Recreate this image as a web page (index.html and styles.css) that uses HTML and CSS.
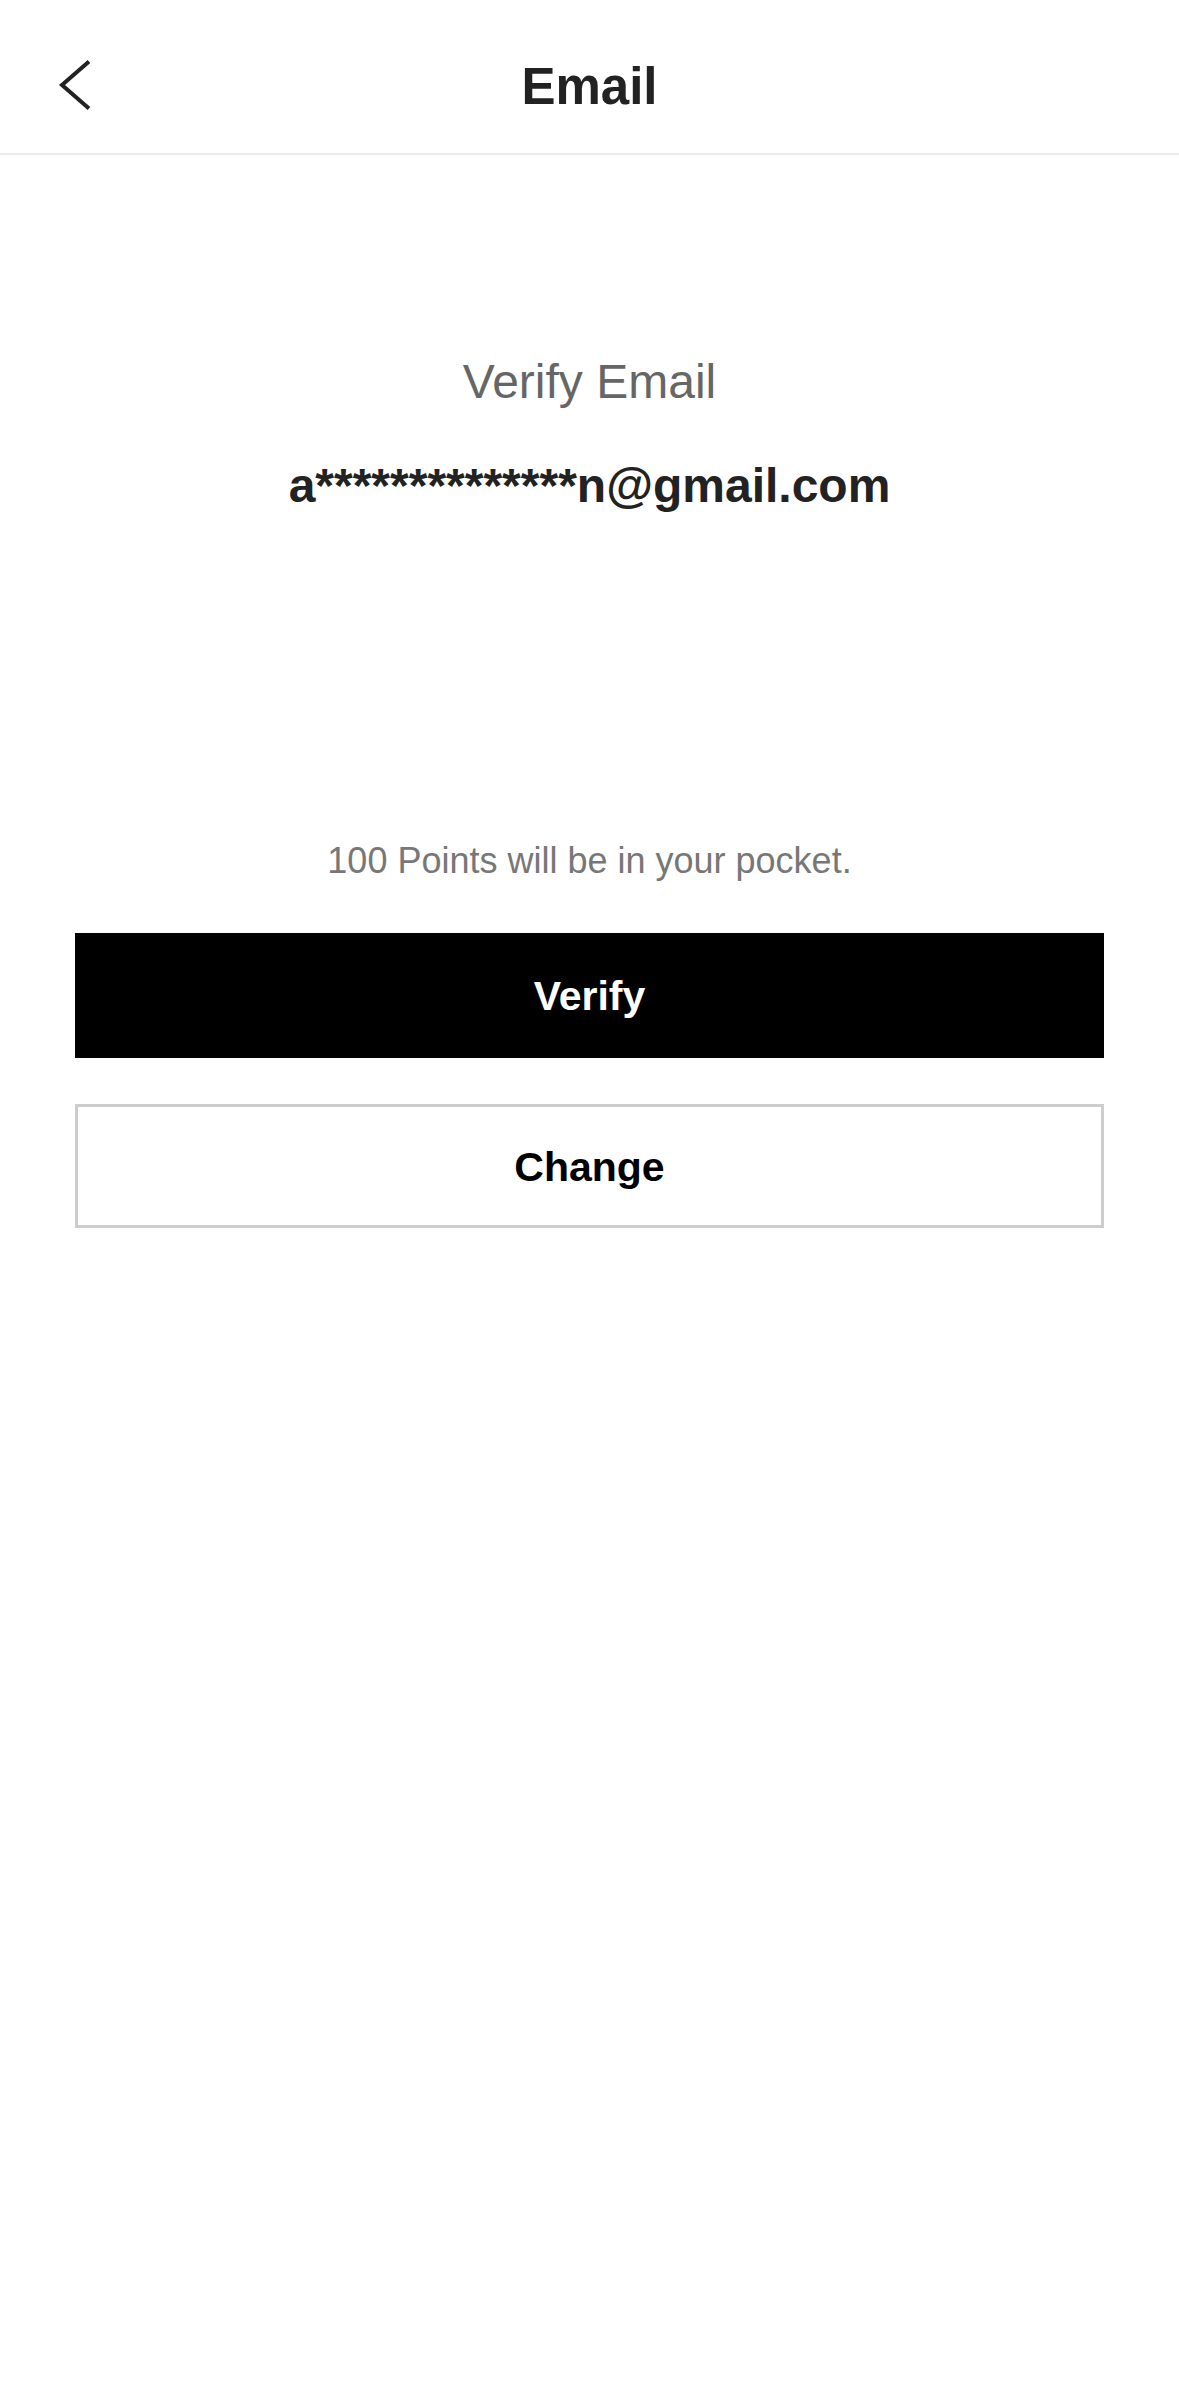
FILE: index.html
```html
<!DOCTYPE html>
<html lang="en">

<head>
    <meta charset="UTF-8">
    <meta name="viewport" content="width=device-width, initial-scale=1.0">
    <title>Email</title>

    <link rel="stylesheet" href="styles.css">
</head>

<body>
    <div class="header">
        <div class="back">
            <svg width="40" height="56" viewBox="0 0 40 56">
                <polyline points="33,4.5 6,28 33,51.5" fill="none" stroke="#222" stroke-width="4" />
            </svg>
        </div>
        <div class="title">Email</div>
        <div class="side"></div>
    </div>

    <div class="main">
        <div class="label">Verify Email</div>
        <div class="address">a**************n@gmail.com</div>

        <div class="note">100 Points will be in your pocket.</div>
        <div class="btn btnVerify">Verify</div>
        <div class="btn btnChange">Change</div>
    </div>
</body>

</html>
```

FILE: styles.css
```css
* {
    padding: 0;
    margin: 0;
    box-sizing: border-box;
}

body {
    width: 100%;
    min-height: 100vh;
    background-color: #fff;
    font-family: "Liberation Sans", Arial, sans-serif;
}

.header {
    height: 155px;
    border-bottom: 2px solid #ebebeb;
    display: grid;
    grid-template-columns: 200px 1fr 200px;
    align-items: center;
}

.back {
    margin-top: 16px;
    padding-left: 56px;
    height: 56px;
    cursor: pointer;
}

.back svg {
    display: block;
}

.title {
    margin-top: 20px;
    font-size: 51px;
    line-height: 60px;
    font-weight: bold;
    color: #222;
    text-align: center;
}

.main {
    padding-top: 199px;
    text-align: center;
}

.label {
    font-size: 48px;
    line-height: 56px;
    color: #666;
}

.address {
    margin-top: 48px;
    font-size: 48px;
    line-height: 56px;
    font-weight: bold;
    color: #222;
}

.note {
    margin-top: 325px;
    font-size: 36px;
    line-height: 44px;
    color: #777;
}

.btn {
    margin: 0 75px;
    height: 125px;
    padding-top: 2px;
    display: flex;
    justify-content: center;
    align-items: center;
    font-size: 41px;
    font-weight: bold;
    cursor: pointer;
}

.btnVerify {
    margin-top: 50px;
    background-color: #000;
    color: #fff;
}

.btnChange {
    margin-top: 46px;
    height: 124px;
    border: 3px solid #cdcdcd;
    color: #000;
}
```
